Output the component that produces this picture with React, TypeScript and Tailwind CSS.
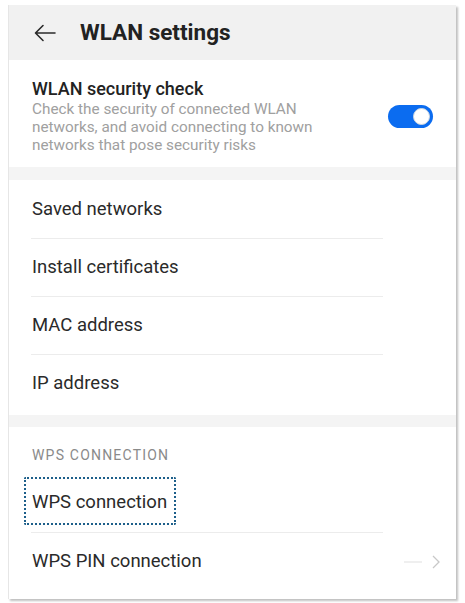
import React from "react";

const font = { fontFamily: "Roboto, 'Noto Sans', 'Liberation Sans', sans-serif" };

function Row({ label, divider = true }: { label: string; divider?: boolean }) {
  return (
    <div className="relative h-[58px] flex items-center pl-[23px]">
      <span className="text-[18.5px] text-[#2a2a2a]">{label}</span>
      {divider && (
        <div className="absolute left-[22px] bottom-0 w-[352px] h-px bg-[#ececec]" />
      )}
    </div>
  );
}

export default function App() {
  return (
    <div className="w-[465px] h-[603px] bg-white overflow-hidden" style={font}>
      <div className="ml-[8px] mt-[5px] w-[448px] h-[594px] border-l border-[#e6e6e6] bg-white shadow-[2px_2px_2px_rgba(0,0,0,0.25)] flex flex-col">
        <div className="h-[55px] shrink-0 bg-[#f1f1f1] flex items-center">
          <svg className="ml-[25px]" width="22" height="18" viewBox="0 0 22 18" fill="none" stroke="#2b2b2b" strokeWidth="1.6" strokeLinecap="round" strokeLinejoin="round">
            <path d="M21 9H2M9 1.5L1.5 9L9 16.5" />
          </svg>
          <span className="ml-[24px] text-[22.5px] font-bold text-[#222]">WLAN settings</span>
        </div>
        <div className="flex items-center pl-[23px] pr-[23px] pt-[18px] pb-[13px] shrink-0">
          <div className="flex-1">
            <div className="text-[18px] font-medium text-[#222] leading-[21px]">WLAN security check</div>
            <div className="text-[15.3px] text-[#a0a0a0] leading-[18px] mt-[1px]">
              Check the security of connected WLAN
              <br />
              networks, and avoid connecting to known
              <br />
              networks that pose security risks
            </div>
          </div>
          <div className="relative w-[45px] h-[23px] rounded-full bg-[#0b6cf0]">
            <div className="absolute right-[3px] top-[3px] w-[17px] h-[17px] rounded-full bg-white border border-[#cfd8e0]" />
          </div>
        </div>
        <div className="h-[13px] shrink-0 bg-[#f4f4f4]" />
        <div className="pt-[1px] shrink-0">
          <Row label="Saved networks" />
          <Row label="Install certificates" />
          <Row label="MAC address" />
          <Row label="IP address" divider={false} />
        </div>
        <div className="h-[12px] shrink-0 bg-[#f4f4f4] mt-[2px]" />
        <div className="pl-[23px] pt-[19px] text-[14px] leading-[18px] text-[#8a8a8a] tracking-[1.2px] shrink-0">WPS CONNECTION</div>
        <div className="relative h-[60px] mt-[9px] flex items-center pl-[23px] shrink-0">
          <div className="absolute left-[15px] top-[4px] w-[152px] h-[48px] border-[2.5px] border-dotted border-[#1d5f8a] rounded-[2px]" />
          <span className="text-[18.5px] text-[#2a2a2a]">WPS connection</span>
          <div className="absolute left-[22px] bottom-0 w-[352px] h-px bg-[#ececec]" />
        </div>
        <div className="relative h-[57px] flex items-center pl-[23px] shrink-0">
          <span className="text-[18.5px] text-[#2a2a2a]">WPS PIN connection</span>
          <div className="absolute right-[34px] top-[28px] w-[18px] h-[2px] bg-[#efefef]" />
          <svg className="absolute right-[16px] top-[22px]" width="8" height="14" viewBox="0 0 8 14" fill="none" stroke="#c8c8c8" strokeWidth="1.3">
            <path d="M1 1l6 6-6 6" />
          </svg>
        </div>
      </div>
    </div>
  );
}
